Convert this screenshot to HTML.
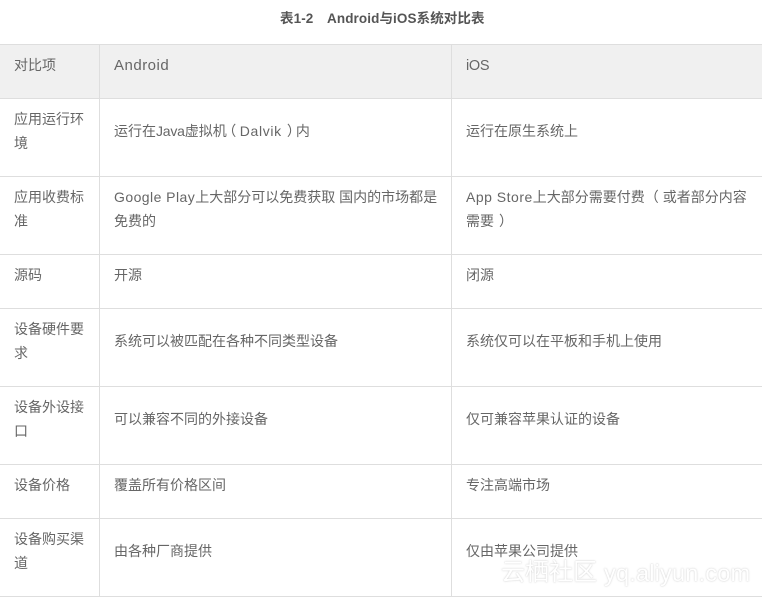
<!DOCTYPE html>
<html><head><meta charset="utf-8"><style>
html,body{margin:0;padding:0;background:#fff}
#p{position:relative;width:762px;height:597px;overflow:hidden;background:#fff;font-family:"Liberation Sans","Noto Sans CJK SC",sans-serif;font-size:14px;color:#666;letter-spacing:0}
#p div{position:absolute;white-space:nowrap;line-height:24px}
#p div.h{background:#dedede;left:0;width:762px;height:1px}
#p div.v{background:#dedede;width:1px;top:44px;height:553px}
.a{left:14px}.b{left:114px}.c{left:466px}
.l{letter-spacing:.5px}
.q{display:inline-block;position:relative}
</style></head><body><div id="p">
<div style="left:0;top:44px;width:762px;height:54px;background:#f0f0f0"></div>
<div style="left:280px;top:7px;font-size:13.5px;font-weight:bold;color:#555;letter-spacing:.1px;white-space:pre">表1-2　Android与iOS系统对比表</div>
<div class="h" style="top:44px"></div><div class="h" style="top:98px"></div><div class="h" style="top:176px"></div><div class="h" style="top:254px"></div><div class="h" style="top:308px"></div><div class="h" style="top:386px"></div><div class="h" style="top:464px"></div><div class="h" style="top:518px"></div><div class="h" style="top:596px"></div>
<div class="v" style="left:99px"></div><div class="v" style="left:451px"></div>
<div class="a" style="top:53px">对比项</div><div class="b" style="top:54px;font-size:15px;letter-spacing:.5px">Android</div><div class="c" style="top:54px;font-size:14.5px;letter-spacing:-.3px">iOS</div>
<div class="a" style="top:107px">应用运行环<br>境</div><div class="b" style="top:119px">运行在<span style="letter-spacing:-.2px">Java</span>虚拟机<span class="q" style="width:13px;left:-4.5px">（</span><span class="l" style="letter-spacing:.65px">Dalvik</span><span class="q" style="width:14px;left:5px">）</span>内</div><div class="c" style="top:119px">运行在原生系统上</div>
<div class="a" style="top:185px">应用收费标<br>准</div><div class="b" style="top:185px"><span class="l" style="letter-spacing:.45px">Google Play</span>上大部分可以免费获取 国内的市场都是<br>免费的</div><div class="c" style="top:185px"><span class="l">App Store</span>上大部分需要付费<span class="q" style="width:18px">（</span>或者部分内容<br>需要<span class="q" style="width:14px;left:5px">）</span></div>
<div class="a" style="top:263px">源码</div><div class="b" style="top:263px">开源</div><div class="c" style="top:263px">闭源</div>
<div class="a" style="top:317px">设备硬件要<br>求</div><div class="b" style="top:329px">系统可以被匹配在各种不同类型设备</div><div class="c" style="top:329px">系统仅可以在平板和手机上使用</div>
<div class="a" style="top:395px">设备外设接<br>口</div><div class="b" style="top:407px">可以兼容不同的外接设备</div><div class="c" style="top:407px">仅可兼容苹果认证的设备</div>
<div class="a" style="top:473px">设备价格</div><div class="b" style="top:473px">覆盖所有价格区间</div><div class="c" style="top:473px">专注高端市场</div>
<div class="a" style="top:527px">设备购买渠<br>道</div><div class="b" style="top:539px">由各种厂商提供</div><div class="c" style="top:539px">仅由苹果公司提供</div>
<div style="left:501px;top:561px;font-size:24px;color:#fff;letter-spacing:0;text-shadow:0 0 1px #bbb,0 0 2px #ccc;opacity:.7">云栖社区<span style="position:absolute;left:103px;top:0;font-size:23.5px;letter-spacing:.2px">yq.aliyun.com</span></div>
</div></body></html>
